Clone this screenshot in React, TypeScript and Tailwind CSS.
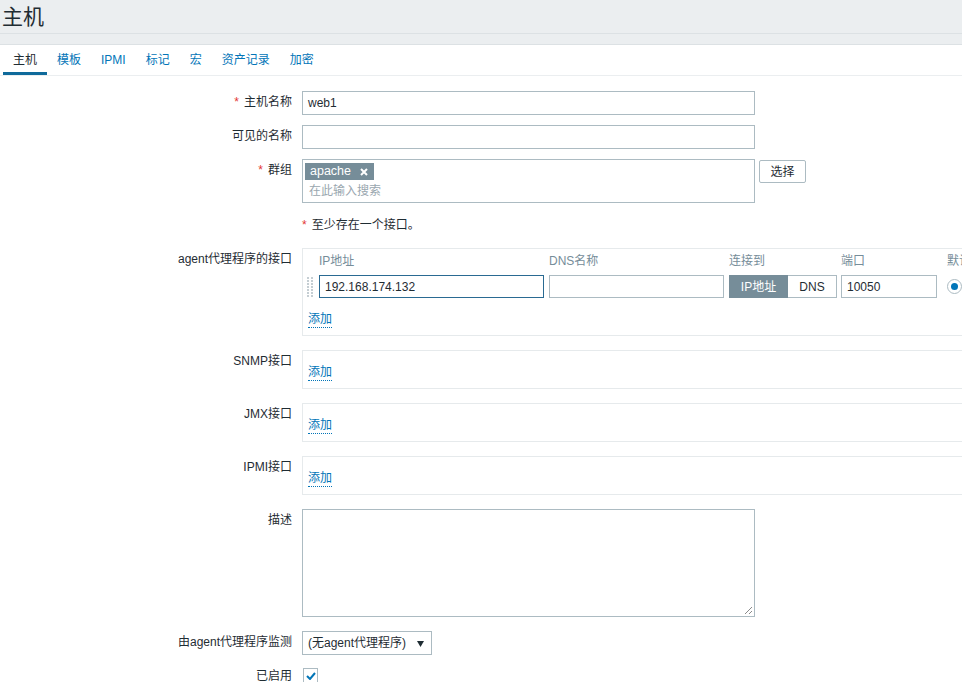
import React from "react";

const font = { fontFamily: '"Liberation Sans", Arial, "Noto Sans CJK SC", sans-serif' };

function Req() {
  return <span className="text-[#e33734] mr-[5px]">*</span>;
}

function Label({ children, className = "" }: { children: React.ReactNode; className?: string }) {
  return <div className={"text-right text-[#1f2c33] leading-[14px] pt-[4px] whitespace-nowrap " + className}>{children}</div>;
}

function AddLink() {
  return (
    <span className="text-[#0275b8] leading-[14px] border-b border-dotted border-[#0275b8] pb-[1px]">添加</span>
  );
}

function Handle() {
  return (
    <svg width="7" height="20" viewBox="0 0 7 20" className="shrink-0">
      {[0, 1, 2, 3, 4, 5, 6].map((r) =>
        [0, 1].map((c) => (
          <rect key={r + "-" + c} x={c * 4} y={r * 3} width="2" height="2" fill="#c5ced3" />
        ))
      )}
    </svg>
  );
}

function EmptyIface() {
  return (
    <div className="w-[700px] h-[39px] border border-[#e6eaec] pl-[5px] pt-[12px]">
      <AddLink />
    </div>
  );
}

export default function App() {
  return (
    <div className="w-[962px] h-[682px] overflow-hidden bg-white text-[12px] text-[#1f2c33]" style={font}>
      <div className="h-[33px] bg-[#ebeef0] pl-[2px] flex items-center">
        <h1 className="text-[21px] leading-[24px] text-[#1f2c33] font-normal">主机</h1>
      </div>
      <div className="h-[12px] bg-[#ebeef0] border-t border-b border-[#dce1e4]" />
      <div className="h-[31px] flex items-stretch pl-[3px] border-b border-[#ebeef0]">
        <div className="px-[10px] flex items-center text-[#1f2c33] border-b-[3px] border-[#0f6a9b] pt-[3px]">主机</div>
        {["模板", "IPMI", "标记", "宏", "资产记录", "加密"].map((t) => (
          <div key={t} className="px-[10px] flex items-center text-[#0275b8]">
            {t}
          </div>
        ))}
      </div>

      <div className="grid grid-cols-[292px_1fr] gap-x-[10px] pt-[15px]">
        <Label>
          <Req />主机名称
        </Label>
        <div>
          <div className="w-[453px] h-[24px] border border-[#acbbc2] px-[5px] flex items-center">web1</div>
        </div>

        <Label className="mt-[10px]">可见的名称</Label>
        <div className="mt-[10px]">
          <div className="w-[453px] h-[24px] border border-[#acbbc2]" />
        </div>

        <Label className="mt-[10px]">
          <Req />群组
        </Label>
        <div className="mt-[10px] flex items-start gap-[4px]">
          <div className="w-[453px] h-[44px] border border-[#acbbc2] pl-[2px] pt-[2px]">
            <div className="inline-flex items-center h-[17px] bg-[#768d99] text-white pl-[5px] pr-[6px] gap-[9px] leading-[17px] text-[12.5px]">
              <span>apache</span>
              <svg width="8" height="8" viewBox="0 0 8 8">
                <path d="M1 1 L7 7 M7 1 L1 7" stroke="white" strokeWidth="2" />
              </svg>
            </div>
            <div className="text-[#9aa7af] leading-[14px] mt-[4px] pl-[4px]">在此输入搜索</div>
          </div>
          <div className="w-[47px] h-[23px] border border-[#acbbc2] rounded-[2px] flex items-center justify-center mt-[1px]">
            选择
          </div>
        </div>

        <div className="mt-[10px]" />
        <div className="mt-[10px] h-[24px] flex items-center">
          <Req />
          至少存在一个接口。
        </div>

        <Label className="mt-[11px]">agent代理程序的接口</Label>
        <div className="mt-[11px]">
          <div className="w-[700px] h-[88px] border border-[#e6eaec] pl-[4px] pt-[5px]">
            <div className="flex text-[#768d99] leading-[14px] h-[14px] mb-[7px]">
              <span className="ml-[12px] w-[230px]">IP地址</span>
              <span className="w-[180px]">DNS名称</span>
              <span className="w-[112px]">连接到</span>
              <span className="w-[106px]">端口</span>
              <span>默认</span>
            </div>
            <div className="flex items-center h-[23px]">
              <Handle />
              <div className="ml-[5px] w-[225px] h-[23px] border border-[#2a6a92] px-[5px] flex items-center">192.168.174.132</div>
              <div className="ml-[5px] w-[175px] h-[23px] border border-[#acbbc2]" />
              <div className="ml-[5px] flex h-[23px]">
                <div className="w-[59px] bg-[#768d99] text-white flex items-center justify-center border border-[#768d99]">IP地址</div>
                <div className="w-[49px] border border-[#acbbc2] border-l-0 flex items-center justify-center">DNS</div>
              </div>
              <div className="ml-[4px] w-[96px] h-[23px] border border-[#acbbc2] px-[5px] flex items-center">10050</div>
              <div className="ml-[10px] w-[15px] h-[15px] rounded-full border border-[#acbbc2] flex items-center justify-center">
                <div className="w-[7px] h-[7px] rounded-full bg-[#0275b8]" />
              </div>
            </div>
            <div className="mt-[12px] pl-[1px]">
              <AddLink />
            </div>
          </div>
        </div>

        <Label className="mt-[14px]">SNMP接口</Label>
        <div className="mt-[14px]">
          <EmptyIface />
        </div>

        <Label className="mt-[14px]">JMX接口</Label>
        <div className="mt-[14px]">
          <EmptyIface />
        </div>

        <Label className="mt-[14px]">IPMI接口</Label>
        <div className="mt-[14px]">
          <EmptyIface />
        </div>

        <Label className="mt-[14px]">描述</Label>
        <div className="mt-[14px]">
          <div className="relative w-[453px] h-[108px] border border-[#acbbc2]">
            <svg className="absolute right-[1px] bottom-[1px]" width="10" height="10" viewBox="0 0 10 10">
              <path d="M9 2 L2 9 M9 6 L6 9" stroke="#8a8a8a" strokeWidth="1" />
            </svg>
          </div>
        </div>

        <Label className="mt-[14px]">由agent代理程序监测</Label>
        <div className="mt-[14px]">
          <div className="w-[130px] h-[24px] border border-[#acbbc2] flex items-center pl-[5px] pr-[7px] justify-between">
            <span>(无agent代理程序)</span>
            <svg width="7" height="7" viewBox="0 0 7 7">
              <path d="M0 1 L7 1 L3.5 7 Z" fill="#1f2c33" />
            </svg>
          </div>
        </div>

        <div className="mt-[13px] text-right leading-[14px] pt-[1px]">已启用</div>
        <div className="mt-[13px]">
          <div className="ml-[1px] w-[15px] h-[15px] border border-[#acbbc2] flex items-center justify-center">
            <svg width="10" height="8" viewBox="0 0 10 8">
              <path d="M1 4 L4 7 L9 1" stroke="#0275b8" strokeWidth="2" fill="none" />
            </svg>
          </div>
        </div>
      </div>
    </div>
  );
}
